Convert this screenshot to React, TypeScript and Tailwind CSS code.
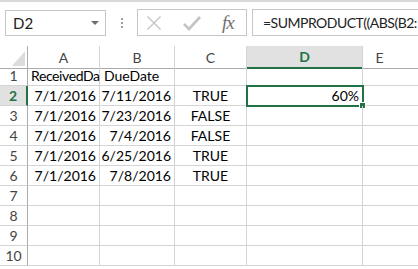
import React from "react";

const rows = [
  ["ReceivedDa", "DueDate", "", ""],
  ["7/1/2016", "7/11/2016", "TRUE", "60%"],
  ["7/1/2016", "7/23/2016", "FALSE", ""],
  ["7/1/2016", "7/4/2016", "FALSE", ""],
  ["7/1/2016", "6/25/2016", "TRUE", ""],
  ["7/1/2016", "7/8/2016", "TRUE", ""],
  ["", "", "", ""],
  ["", "", "", ""],
  ["", "", "", ""],
  ["", "", "", ""],
];

const cols = "grid grid-cols-[28px_72px_75px_72px_116px_1fr]";

function App() {
  return (
    <div className="w-[418px] h-[269px] overflow-hidden bg-white border-t-2 border-[#d9d9d9] font-['Lato',sans-serif] text-black">
      {/* formula bar */}
      <div className="h-[44px] flex items-start pt-[7px]">
        <div className="ml-[5px] mt-[1px] w-[101px] h-[26px] border border-[#c6c6c6] flex items-center justify-between pl-[7px] pr-[6px]">
          <span className="text-[15px] text-[#222]">D2</span>
          <span className="w-0 h-0 border-l-[4px] border-r-[4px] border-t-[4px] border-l-transparent border-r-transparent border-t-[#6d6d6d]" />
        </div>
        <div className="w-[31px] h-[27px] flex flex-col items-center justify-center gap-[2px]">
          <span className="w-[2px] h-[2px] bg-[#a0a0a0]" />
          <span className="w-[2px] h-[2px] bg-[#a0a0a0]" />
          <span className="w-[2px] h-[2px] bg-[#a0a0a0]" />
        </div>
        <div className="w-[110px] h-[27px] border border-[#c6c6c6] flex items-center pl-[8px]">
          <svg width="16" height="16" viewBox="0 0 16 16" className="mr-[21px]">
            <path d="M1.5 1.5 L14.5 14.5 M14.5 1.5 L1.5 14.5" stroke="#c4c4c4" strokeWidth="1.4" fill="none" />
          </svg>
          <svg width="18" height="16" viewBox="0 0 18 16" className="mr-[21px]">
            <path d="M1 9 L6 14 L17 2" stroke="#c4c4c4" strokeWidth="2.6" fill="none" />
          </svg>
          <span className="font-['Liberation_Serif',serif] italic text-[19px] text-[#6f6f6f] leading-none tracking-[-1px]">fx</span>
        </div>
        <div className="ml-[5px] flex-1 h-[27px] border border-r-0 border-[#c6c6c6] flex items-center pl-[10px] whitespace-nowrap overflow-hidden">
          <span className="text-[14px] tracking-[-0.5px] text-[#222]">=SUMPRODUCT((ABS(B2:</span>
        </div>
      </div>

      {/* column headers */}
      <div className={`${cols} h-[20px] text-[14px] text-[#444]`}>
        <div className="relative border-r border-b border-[#ababab]">
          <svg width="13" height="15" viewBox="0 0 13 15" className="absolute right-[2px] bottom-[2px]">
            <path d="M13 0 L13 15 L0 15 Z" fill="#dcdcdc" />
          </svg>
        </div>
        {["A", "B", "C"].map((c) => (
          <div key={c} className="flex items-center justify-center border-r border-[#d4d4d4] border-b border-b-[#ababab]">
            {c}
          </div>
        ))}
        <div className="flex items-center justify-center bg-[#e1e1e1] border-r border-[#d4d4d4] border-b-2 border-b-[#217346] text-[#217346] font-bold">
          D
        </div>
        <div className="flex items-center justify-center border-b border-[#ababab]">
          <span className="pr-[22px]">E</span>
        </div>
      </div>

      {/* rows */}
      {rows.map((r, i) => {
        const sel = i === 1;
        return (
          <div key={i} className={`${cols} h-[20px] text-[14px] leading-[19px]`}>
            <div
              className={
                sel
                  ? "flex items-center justify-center bg-[#e1e1e1] text-[#217346] font-bold border-b border-[#d4d4d4] border-r-2 border-r-[#217346]"
                  : "flex items-center justify-center text-[#444] border-b border-[#d4d4d4] border-r border-r-[#ababab]"
              }
            >
              {i + 1}
            </div>
            <div className={`border-r border-b border-[#d4d4d4] whitespace-nowrap ${i === 0 ? "pl-[3px] tracking-[-0.4px]" : "text-right pr-[3px]"}`}>
              {r[0]}
            </div>
            <div className={`border-r border-b border-[#d4d4d4] whitespace-nowrap ${i === 0 ? "pl-[4px]" : "text-right pr-[3px]"}`}>
              {r[1]}
            </div>
            <div className="border-r border-b border-[#d4d4d4] text-center">{r[2]}</div>
            <div className="relative border-r border-b border-[#d4d4d4] text-right pr-[3px]">
              {r[3]}
              {sel && (
                <>
                  <span className="absolute left-[-1px] top-[-1px] w-[118px] h-[22px] border-2 border-[#217346]" />
                  <span className="absolute right-[-4px] bottom-[-4px] w-[7px] h-[7px] bg-[#217346] border border-white" />
                </>
              )}
            </div>
            <div className="border-b border-[#d4d4d4]" />
          </div>
        );
      })}
    </div>
  );
}

export default App;
